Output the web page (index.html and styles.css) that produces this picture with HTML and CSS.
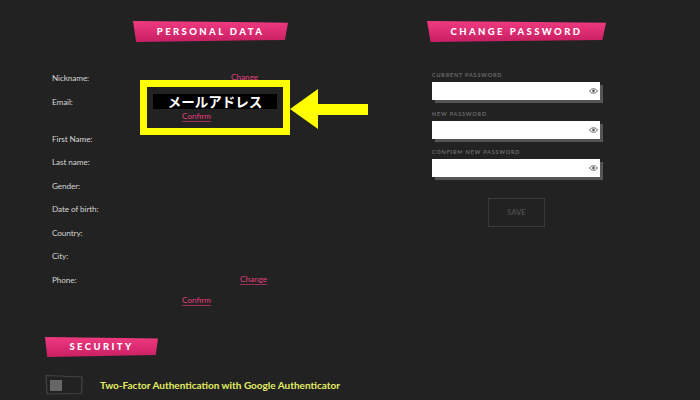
FILE: index.html
```html
<!DOCTYPE html>
<html lang="en">
<head>
    <meta charset="UTF-8">
    <meta name="viewport" content="width=device-width, initial-scale=1.0">
    <title>Account settings</title>
    <link rel="stylesheet" href="styles.css">
</head>
<body>
    <div class="page">
        <div class="columns">
            <!-- Personal data -->
            <section class="personal">
                <h2 class="banner banner-personal">PERSONAL DATA</h2>
                <div class="data-list">
                    <div class="data-row">
                        <span class="data-label">Nickname:</span>
                        <a class="link link-nick" href="#">Change</a>
                    </div>
                    <div class="data-row data-row-email">
                        <span class="data-label">Email:</span>
                        <a class="link link-confirm" href="#">Confirm</a>
                    </div>
                    <div class="data-row"><span class="data-label">First Name:</span></div>
                    <div class="data-row"><span class="data-label">Last name:</span></div>
                    <div class="data-row"><span class="data-label">Gender:</span></div>
                    <div class="data-row"><span class="data-label">Date of birth:</span></div>
                    <div class="data-row"><span class="data-label">Country:</span></div>
                    <div class="data-row"><span class="data-label">City:</span></div>
                    <div class="data-row">
                        <span class="data-label">Phone:</span>
                        <a class="link link-phone" href="#">Change</a>
                    </div>
                    <div class="data-row data-row-confirm">
                        <span class="data-label"></span>
                        <a class="link" href="#">Confirm</a>
                    </div>
                </div>
            </section>

            <!-- Change password -->
            <section class="password">
                <h2 class="banner banner-password">CHANGE PASSWORD</h2>
                <form class="password-form">
                    <label class="field">
                        <span class="field-label">CURRENT PASSWORD</span>
                        <span class="field-box">
                            <svg class="eye" viewBox="0 0 12 8"><path d="M.8 4C2 2 3.900 1 6 1s4 1 5.200 3C10 6 8.100 7 6 7S2 6 .8 4z" fill="none" stroke="#666" stroke-width="1.300"/><circle cx="6" cy="4" r="1.900" fill="#666"/></svg>
                        </span>
                    </label>
                    <label class="field">
                        <span class="field-label">NEW PASSWORD</span>
                        <span class="field-box">
                            <svg class="eye" viewBox="0 0 12 8"><path d="M.8 4C2 2 3.900 1 6 1s4 1 5.200 3C10 6 8.100 7 6 7S2 6 .8 4z" fill="none" stroke="#666" stroke-width="1.300"/><circle cx="6" cy="4" r="1.900" fill="#666"/></svg>
                        </span>
                    </label>
                    <label class="field">
                        <span class="field-label">CONFIRM NEW PASSWORD</span>
                        <span class="field-box">
                            <svg class="eye" viewBox="0 0 12 8"><path d="M.8 4C2 2 3.900 1 6 1s4 1 5.200 3C10 6 8.100 7 6 7S2 6 .8 4z" fill="none" stroke="#666" stroke-width="1.300"/><circle cx="6" cy="4" r="1.900" fill="#666"/></svg>
                        </span>
                    </label>
                    <button class="save" type="button">SAVE</button>
                </form>
            </section>
        </div>

        <!-- Security -->
        <section class="security">
            <h2 class="banner banner-security">SECURITY</h2>
            <div class="two-factor">
                <svg class="toggle" viewBox="0 0 38 21">
                    <path d="M1 1.500L37 3l-.5 16.500L2 20z" fill="none" stroke="#444" stroke-width="1.200"/>
                    <rect x="5" y="6" width="12" height="11" fill="#666"/>
                </svg>
                <span class="two-factor-text">Two-Factor Authentication with Google Authenticator</span>
            </div>
        </section>

        <!-- Annotation drawn over the screenshot -->
        <div class="callout">
            <div class="callout-label">メールアドレス</div>
        </div>
        <svg class="arrow" viewBox="0 0 79 40"><path d="M0 20L28 0v15h50v11H28v14z" fill="#ffff00"/></svg>
    </div>
</body>
</html>
```

FILE: styles.css
```css
body {
    margin: 0;
    padding: 0;
    background-color: #222222;
    font-family: 'Lato', 'Open Sans', sans-serif;
    color: #d4d4d4;
}
.page {
    position: relative;
    width: 700px;
    height: 400px;
    overflow: hidden;
    box-sizing: border-box;
    padding-top: 21px;
}
.columns {
    display: flex;
    height: 316px;
}
.banner {
    margin: 0;
    height: 21px;
    line-height: 21px;
    color: #fff;
    font-size: 9.500px;
    font-weight: 900;
    letter-spacing: 2.400px;
    text-align: center;
    background: linear-gradient(#f03a80, #c91f63);
    clip-path: polygon(0 0, 100% 8%, 98% 90%, 2% 100%);
}
.personal {
    width: 375px;
    padding-left: 52px;
    box-sizing: border-box;
}
.banner-personal {
    width: 155px;
    margin-left: 81px;
}
.data-list {
    margin-top: 25px;
}
.data-row {
    display: flex;
    align-items: flex-start;
    height: 23.5px;
    line-height: 23.5px;
    font-size: 8.200px;
    letter-spacing: -0.1px;
}
.data-row-email {
    height: 37px;
}
.data-row-email .link-confirm {
    margin-top: 20px;
}
.data-row-confirm {
    margin-top: -3.500px;
}
.data-label {
    width: 130px;
    flex-shrink: 0;
}
.link {
    color: #e0407a;
    line-height: 11px;
    height: 10px;
    margin-top: 6px;
    text-decoration: none;
    border-bottom: 1px solid #a02c58;
    letter-spacing: 0;
}
.link-nick {
    margin-left: 49px;
    margin-top: 5px;
}
.link-phone {
    margin-left: 58px;
    margin-top: 5px;
}
.password {
    margin-left: 52px;
    width: 180px;
}
.banner-password {
    width: 179px;
}
.password-form {
    display: flex;
    flex-direction: column;
    margin-top: 29px;
    padding-left: 5px;
}
.field {
    display: block;
    height: 38.7px;
}
.field-label {
    display: block;
    height: 8px;
    line-height: 8px;
    font-size: 5.500px;
    font-weight: 700;
    letter-spacing: 0.8px;
    color: #6a6a6a;
}
.field-box {
    display: flex;
    align-items: center;
    justify-content: flex-end;
    width: 168px;
    height: 18px;
    margin-top: 3px;
    padding-right: 2px;
    box-sizing: border-box;
    background-color: #fff;
    box-shadow: 3px 3px 0 #555;
}
.eye {
    width: 9px;
    height: 6px;
}
.save {
    align-self: flex-start;
    width: 57px;
    height: 29px;
    margin: 11px 0 0 56px;
    padding: 0;
    background: none;
    border: 1px solid #3a3a3a;
    color: #4c4c4c;
    font-family: inherit;
    font-size: 7.500px;
    font-weight: 700;
}
.security {
    padding-left: 45px;
}
.banner-security {
    width: 113px;
    height: 20px;
    line-height: 20px;
}
.two-factor {
    display: flex;
    align-items: center;
    margin-top: 17px;
}
.toggle {
    width: 38px;
    height: 21px;
}
.two-factor-text {
    margin-left: 17px;
    font-size: 10px;
    font-weight: 700;
    color: #e4ee62;
}
.callout {
    position: absolute;
    left: 140px;
    top: 80px;
    width: 150px;
    height: 55px;
    box-sizing: border-box;
    border: 7px solid #ffff00;
    padding: 7px 6px;
}
.callout-label {
    height: 15px;
    line-height: 15px;
    background-color: #000;
    color: #fff;
    font-family: 'Noto Sans CJK JP', sans-serif;
    font-size: 13.500px;
    font-weight: 700;
    text-align: center;
}
.arrow {
    position: absolute;
    left: 290px;
    top: 89px;
    width: 79px;
    height: 40px;
}
```
